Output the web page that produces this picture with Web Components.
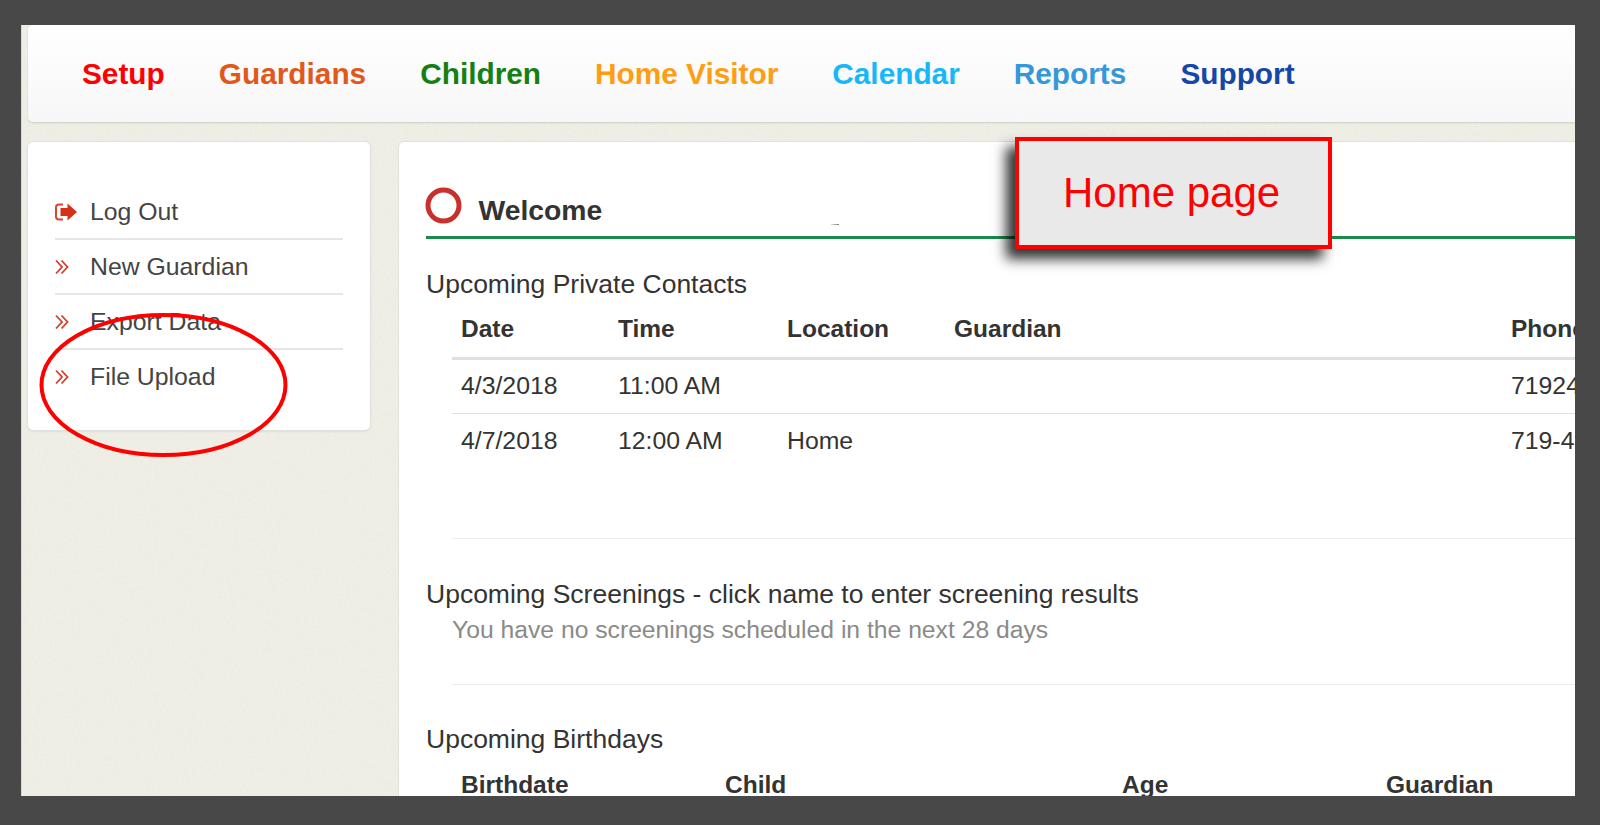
<!DOCTYPE html>
<html>
<head>
<meta charset="utf-8">
<title>Home page</title>
<style>
  html, body { margin: 0; padding: 0; height: 100%; overflow: hidden; background: #484848; }
  body { font-family: "Liberation Sans", Arial, sans-serif; }
</style>
</head>
<body>
<screen-frame>
  <top-nav>
    <nav-link color="#ff0000">Setup</nav-link>
    <nav-link color="#e2581a">Guardians</nav-link>
    <nav-link color="#138012">Children</nav-link>
    <nav-link color="#ff9d13">Home Visitor</nav-link>
    <nav-link color="#18b7f8">Calendar</nav-link>
    <nav-link color="#3498db">Reports</nav-link>
    <nav-link color="#1546a8">Support</nav-link>
  </top-nav>
  <page-body>
    <side-menu slot="side">
      <menu-item icon="logout">Log Out</menu-item>
      <menu-item>New Guardian</menu-item>
      <menu-item>Export Data</menu-item>
      <menu-item last>File Upload</menu-item>
    </side-menu>
    <content-panel slot="main">
      <panel-head>Welcome</panel-head>
      <section-title>Upcoming Private Contacts</section-title>
      <table-row head style="--cols: 157px 169px 167px 557px 100px">
        <span>Date</span><span>Time</span><span>Location</span><span>Guardian</span><span>Phone</span>
      </table-row>
      <table-row style="--cols: 157px 169px 167px 557px 100px">
        <span>4/3/2018</span><span>11:00 AM</span><span></span><span></span><span>71924</span>
      </table-row>
      <table-row last style="--cols: 157px 169px 167px 557px 100px; padding-top: 9px">
        <span>4/7/2018</span><span>12:00 AM</span><span>Home</span><span></span><span>719-4</span>
      </table-row>
      <panel-rule style="margin-top: 72.500px"></panel-rule>
      <section-title style="margin: 38.400px 0 -1px">Upcoming Screenings - click name to enter screening results</section-title>
      <muted-note>You have no screenings scheduled in the next 28 days</muted-note>
      <panel-rule style="margin-top: 36.700px"></panel-rule>
      <section-title style="margin-top: 37.500px">Upcoming Birthdays</section-title>
      <table-row head style="--cols: 264px 397px 264px 200px; padding-top: 10px">
        <span>Birthdate</span><span>Child</span><span>Age</span><span>Guardian</span>
      </table-row>
    </content-panel>
  </page-body>
  <note-callout slot="over">Home page</note-callout>
  <ink-circle slot="over"></ink-circle>
</screen-frame>

<script>
function shadow(el, html) {
  el.attachShadow({ mode: 'open' }).innerHTML = html;
}

class ScreenFrame extends HTMLElement {
  constructor() {
    super();
    shadow(this, `
      <style>
        :host { display: block; width: 1600px; height: 825px; box-sizing: border-box; padding: 25px 25px 29px 21px; background: #484848; position: relative; overflow: hidden; }
        .page { position: relative; height: 771px; overflow: hidden; background: #efefe7; box-shadow: inset 1px 0 0 #d9d9d2; }
        .grain { position: absolute; left: 0; top: 0; width: 100%; height: 100%; opacity: .35; }
        .flow { position: relative; display: flex; flex-direction: column; gap: 20px; padding-left: 7px; }
      </style>
      <div class="page">
        <svg class="grain" aria-hidden="true">
          <filter id="n"><feTurbulence type="fractalNoise" baseFrequency=".35" numOctaves="2" seed="4"/><feColorMatrix values="0 0 0 0 .72  0 0 0 0 .72  0 0 0 0 .62  0 0 0 .9 -.25"/></filter>
          <rect width="100%" height="100%" filter="url(#n)"/>
        </svg>
        <div class="flow"><slot></slot></div>
      </div>
      <slot name="over"></slot>`);
  }
}

class TopNav extends HTMLElement {
  constructor() {
    super();
    shadow(this, `
      <style>
        :host { display: flex; align-items: center; gap: 54px; height: 97px; box-sizing: border-box; padding: 0 0 0 54px; margin-right: -8px; border-radius: 5px; background: linear-gradient(#ffffff, #f7f7f7); box-shadow: 0 1px 2px rgba(0,0,0,.14); }
      </style>
      <slot></slot>`);
  }
}

class NavLink extends HTMLElement {
  constructor() {
    super();
    shadow(this, `
      <style>
        :host { display: block; font-size: 29.800px; font-weight: bold; white-space: nowrap; color: ${this.getAttribute('color')}; }
      </style>
      <slot></slot>`);
  }
}

class PageBody extends HTMLElement {
  constructor() {
    super();
    shadow(this, `
      <style>
        :host { display: flex; align-items: flex-start; gap: 29px; margin-right: -8px; }
      </style>
      <slot name="side"></slot>
      <slot name="main"></slot>`);
  }
}

class SideMenu extends HTMLElement {
  constructor() {
    super();
    shadow(this, `
      <style>
        :host { display: block; flex: none; width: 342px; height: 288px; box-sizing: border-box; padding: 43px 27px 0; background: #fff; border-radius: 5px; box-shadow: 0 0 0 1px #e2e2dc, 0 1px 3px rgba(0,0,0,.12); }
      </style>
      <slot></slot>`);
  }
}

class MenuItem extends HTMLElement {
  constructor() {
    super();
    const logout = `<svg width="23" height="18" viewBox="0 0 23 18"><path d="M8 1.500H4Q1 1.500 1 4.500V13.500Q1 16.500 4 16.500H8" fill="none" stroke="#d9452e" stroke-width="2"/><path d="M12.500 .500L22 9L12.500 17.500V13H5.500V5H12.500Z" fill="#d4301a"/></svg>`;
    const chevrons = `<svg width="14" height="16" viewBox="0 0 14 16"><path d="M1 1.500L7 8L1 14.500M6.500 1.500L12.500 8L6.500 14.500" fill="none" stroke="#d4402a" stroke-width="1.800"/></svg>`;
    shadow(this, `
      <style>
        :host { display: flex; align-items: center; height: 53px; font-size: 24.800px; color: #444; border-bottom: 2px solid #e6e6e6; }
        :host([last]) { border-bottom: 0; }
        .ic { flex: none; width: 35px; display: flex; align-items: center; }
      </style>
      <span class="ic">${this.getAttribute('icon') === 'logout' ? logout : chevrons}</span>
      <span class="tx"><slot></slot></span>`);
  }
}

class ContentPanel extends HTMLElement {
  constructor() {
    super();
    shadow(this, `
      <style>
        :host { display: block; flex: 1; min-width: 0; height: 700px; box-sizing: border-box; padding: 0 0 0 27px; background: #fff; border-radius: 5px 0 0 0; box-shadow: 0 0 0 1px #e2e2dc; color: #333; font-size: 24.800px; }
      </style>
      <slot></slot>`);
  }
}

class PanelHead extends HTMLElement {
  constructor() {
    super();
    shadow(this, `
      <style>
        :host { display: flex; align-items: flex-end; height: 94px; margin-bottom: 27.500px; border-bottom: 3px solid #1c8a4c; position: relative; font-size: 28.300px; font-weight: bold; color: #333; }
        svg { flex: none; margin: 0 16.500px 12.500px -1px; }
        .tx { padding-bottom: 9px; }
        .speck { position: absolute; left: 405px; bottom: 11px; width: 8px; height: 1px; background: linear-gradient(90deg, #ddd, #777); }
      </style>
      <svg width="37" height="37" viewBox="0 0 37 37"><circle cx="18.500" cy="18.500" r="15.500" fill="none" stroke="#c9302c" stroke-width="5"/></svg>
      <span class="tx"><slot></slot></span>
      <span class="speck"></span>`);
  }
}

class SectionTitle extends HTMLElement {
  constructor() {
    super();
    shadow(this, `
      <style>
        :host { display: block; height: 35px; line-height: 35px; font-size: 26.500px; color: #333; white-space: nowrap; }
      </style>
      <slot></slot>`);
  }
}

class TableRow extends HTMLElement {
  constructor() {
    super();
    shadow(this, `
      <style>
        :host { display: grid; grid-template-columns: var(--cols); margin-left: 26px; padding: 8px 0 10px; height: 35px; line-height: 35px; border-bottom: 1px solid #e0e0e0; white-space: nowrap; }
        :host([head]) { font-size: 24.500px; font-weight: bold; padding: 9.500px 0 10.500px; border-bottom: 3px solid #e0e0e0; }
        :host([last]) { border-bottom-color: transparent; padding-bottom: 7px; }
        ::slotted(span) { padding-left: 9px; }
      </style>
      <slot></slot>`);
  }
}

class PanelRule extends HTMLElement {
  constructor() {
    super();
    shadow(this, `
      <style>
        :host { display: block; height: 1px; margin-left: 26px; background: #ececec; }
      </style>`);
  }
}

class MutedNote extends HTMLElement {
  constructor() {
    super();
    shadow(this, `
      <style>
        :host { display: block; height: 35px; line-height: 35px; margin-left: 26px; padding-top: .600px; font-size: 24.700px; color: #8a8a8a; white-space: nowrap; }
      </style>
      <slot></slot>`);
  }
}

class NoteCallout extends HTMLElement {
  constructor() {
    super();
    shadow(this, `
      <style>
        :host { position: absolute; left: 1015px; top: 137px; width: 317px; height: 112px; box-sizing: border-box; padding-left: 44px; display: flex; align-items: center; background: #e9e9e9; border: 4px solid #ff0000; box-shadow: -9px 10px 12px rgba(0,0,0,.8); color: #ff0000; font-size: 42px; }
      </style>
      <slot></slot>`);
  }
}

class InkCircle extends HTMLElement {
  constructor() {
    super();
    shadow(this, `
      <style>
        :host { position: absolute; left: 0; top: 300px; width: 320px; height: 170px; pointer-events: none; }
        svg { display: block; }
      </style>
      <svg width="320" height="170" viewBox="0 0 320 170"><ellipse cx="163.500" cy="85" rx="122" ry="70" fill="none" stroke="#ff0000" stroke-width="4"/></svg>`);
  }
}

customElements.define('screen-frame', ScreenFrame);
customElements.define('top-nav', TopNav);
customElements.define('nav-link', NavLink);
customElements.define('page-body', PageBody);
customElements.define('side-menu', SideMenu);
customElements.define('menu-item', MenuItem);
customElements.define('content-panel', ContentPanel);
customElements.define('panel-head', PanelHead);
customElements.define('section-title', SectionTitle);
customElements.define('table-row', TableRow);
customElements.define('panel-rule', PanelRule);
customElements.define('muted-note', MutedNote);
customElements.define('note-callout', NoteCallout);
customElements.define('ink-circle', InkCircle);
</script>
</body>
</html>
